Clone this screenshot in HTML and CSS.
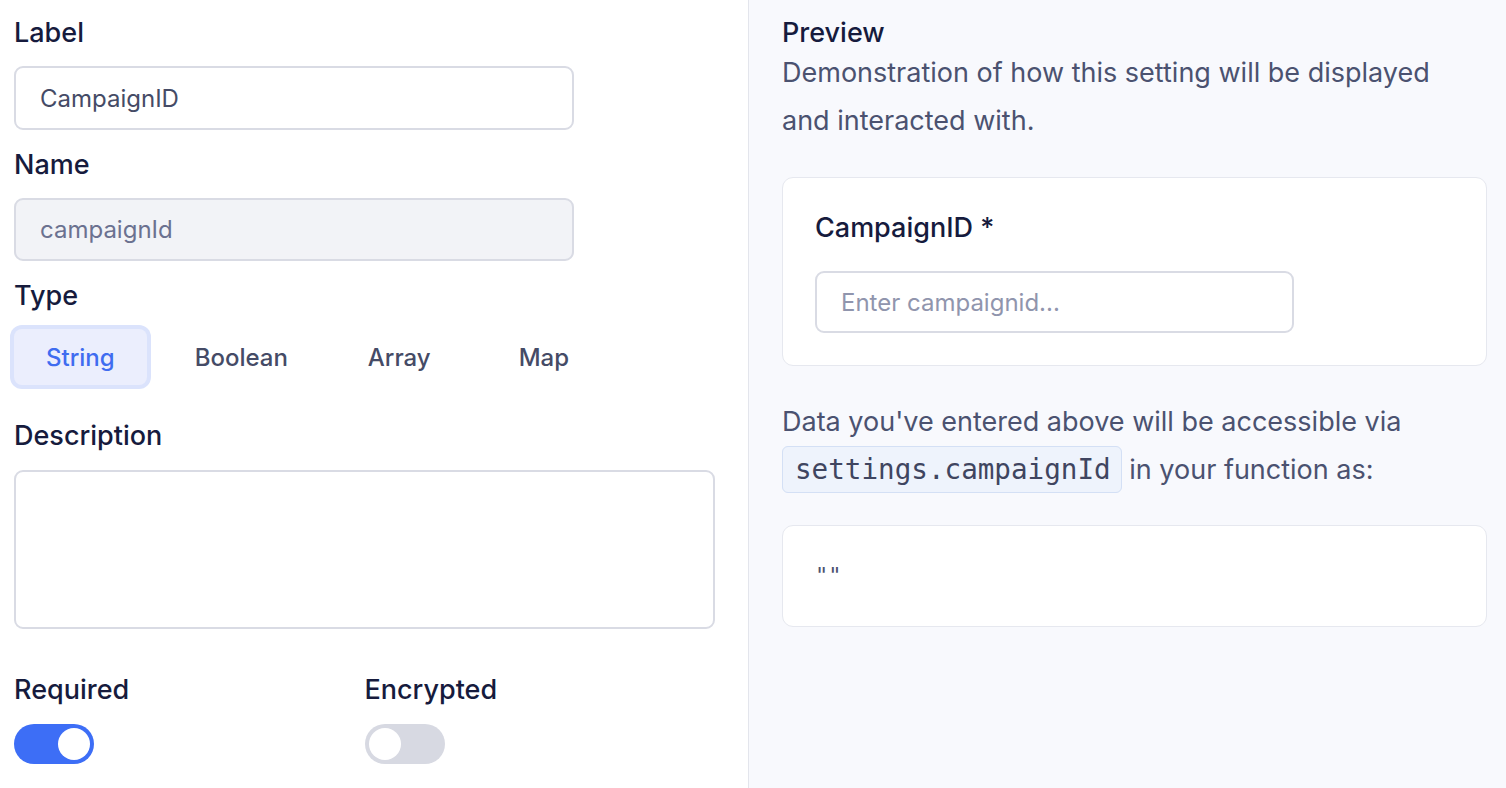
FILE: index.html
```html
<!DOCTYPE html>
<html lang="en">
<head>
<meta charset="utf-8">
<title>Setting editor</title>
<link rel="stylesheet" href="styles.css">
</head>
<body>
<div class="layout">
  <section class="editor">
    <div class="field">
      <label class="field-label">Label</label>
      <div class="input">CampaignID</div>
    </div>
    <div class="field">
      <label class="field-label">Name</label>
      <div class="input input-disabled">campaignId</div>
    </div>
    <div class="field">
      <label class="field-label">Type</label>
      <div class="types">
        <button class="type type-active">String</button>
        <button class="type">Boolean</button>
        <button class="type">Array</button>
        <button class="type type-map">Map</button>
      </div>
    </div>
    <div class="field field-desc">
      <label class="field-label">Description</label>
      <div class="textarea"></div>
    </div>
    <div class="toggles">
      <div class="toggle-field">
        <label class="field-label">Required</label>
        <div class="toggle toggle-on"><span class="knob"></span></div>
      </div>
      <div class="toggle-field">
        <label class="field-label">Encrypted</label>
        <div class="toggle"><span class="knob"></span></div>
      </div>
    </div>
  </section>
  <section class="preview">
    <h2 class="preview-title">Preview</h2>
    <p class="preview-text">Demonstration of how this setting will be displayed and interacted with.</p>
    <div class="card card-form">
      <div class="card-label">CampaignID *</div>
      <div class="input input-preview"><span class="placeholder">Enter campaignid...</span></div>
    </div>
    <p class="access-text">Data you've entered above will be accessible via <code class="chip">settings.campaignId</code> in your function as:</p>
    <div class="card card-code"><code class="value">""</code></div>
  </section>
</div>
</body>
</html>
```
FILE: styles.css
```css
* { box-sizing: border-box; }
html, body { margin: 0; padding: 0; }
body {
  font-family: Inter, "Noto Sans", "Liberation Sans", sans-serif;
  color: #161b3d;
  background: #ffffff;
  width: 1506px;
  height: 788px;
  overflow: hidden;
}
.layout {
  display: grid;
  grid-template-columns: 749px 1fr;
  height: 788px;
}
.editor {
  border-right: 1px solid #e3e5ec;
  padding: 15px 33px 0 14px;
  display: flex;
  flex-direction: column;
  gap: 17px;
  background: #ffffff;
}
.field { display: flex; flex-direction: column; gap: 15px; }
.field-label {
  font-size: 27px;
  line-height: 36px;
  font-weight: 500;
  color: #161b3d;
}
.input {
  width: 560px;
  height: 64px;
  border: 2px solid #d9dbe4;
  border-radius: 9px;
  background: #ffffff;
  padding: 0 24px;
  display: flex;
  align-items: center;
  font-size: 24px;
  color: #454b66;
}
.input-disabled {
  background: #f2f3f7;
  color: #6b7190;
  height: 63px;
}
.types {
  display: flex;
  gap: 16px;
}
.type {
  font-family: inherit;
  font-size: 24px;
  font-weight: 500;
  color: #454b66;
  background: transparent;
  border: none;
  border-radius: 8px;
  height: 56px;
  padding: 0 32px;
  cursor: pointer;
}
.type-active {
  background: #ebeefd;
  color: #3f6cf0;
  box-shadow: 0 0 0 4px #dbe3fc;
}
.type-map { margin-left: 8px; }
.field-desc { margin-top: 16px; gap: 16px; }
.textarea {
  height: 159px;
  border: 2px solid #d9dbe4;
  border-radius: 9px;
  background: #ffffff;
}
.toggles {
  margin-top: 26px;
  display: grid;
  grid-template-columns: 1fr 1fr;
}
.toggle-field { display: flex; flex-direction: column; gap: 16px; }
.toggle {
  width: 80px;
  height: 40px;
  border-radius: 20px;
  background: #d7d9e2;
  padding: 4px;
  display: flex;
}
.knob {
  width: 32px;
  height: 32px;
  border-radius: 50%;
  background: #ffffff;
}
.toggle-on { background: #3d6ef6; justify-content: flex-end; }

.preview {
  background: #f8f9fd;
  padding: 17px 19px 0 33px;
}
.preview-title {
  margin: 0;
  font-size: 27px;
  line-height: 32px;
  font-weight: 500;
  color: #161b3d;
}
.preview-text {
  margin: 0;
  font-size: 27px;
  line-height: 48px;
  color: #4b5270;
  max-width: 670px;
}
.card {
  background: #ffffff;
  border: 1px solid #e6e8ef;
  border-radius: 11px;
  padding: 32px;
}
.card-form { margin-top: 32px; }
.card-label {
  font-size: 27px;
  line-height: 36px;
  font-weight: 500;
  color: #161b3d;
  margin-bottom: 25px;
}
.input-preview {
  width: 479px;
  height: 62px;
}
.placeholder { color: #9095ad; }
.access-text {
  margin: 32px 0 0;
  font-size: 27px;
  line-height: 48px;
  color: #4b5270;
}
.chip {
  font-family: "DejaVu Sans Mono", "Liberation Mono", monospace;
  font-size: 27.6px;
  color: #3f4560;
  background: #eef3fc;
  border: 1px solid #d4e0f5;
  border-radius: 6px;
  padding: 6px 10px 6px 12px;
}
.card-code { margin-top: 31px; padding-top: 32px; padding-bottom: 32px; }
.value {
  display: block;
  font-family: "DejaVu Sans Mono", "Liberation Mono", monospace;
  font-size: 22px;
  line-height: 36px;
  color: #4b5270;
}
```
